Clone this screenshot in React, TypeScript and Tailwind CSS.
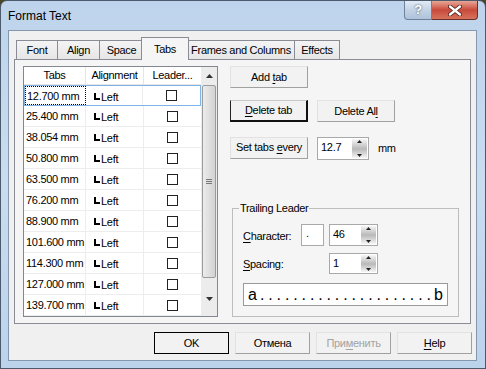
import React from "react";

const rows = [
  "12.700 mm",
  "25.400 mm",
  "38.054 mm",
  "50.800 mm",
  "63.500 mm",
  "76.200 mm",
  "88.900 mm",
  "101.600 mm",
  "114.300 mm",
  "127.000 mm",
  "139.700 mm",
];

const tabs = [
  { label: "Font", w: "w-[41px]" },
  { label: "Align", w: "w-[42px]" },
  { label: "Space", w: "w-[44px]" },
  { label: "Tabs", w: "w-[44px]", active: true },
  { label: "Frames and Columns", w: "w-[107px]" },
  { label: "Effects", w: "w-[46px]", last: true },
];

function U({ children }: { children: React.ReactNode }) {
  return <span className="underline underline-offset-[2px] decoration-1">{children}</span>;
}

function Btn({
  w,
  h = "h-[22px]",
  variant = "normal",
  children,
}: {
  w: string;
  h?: string;
  variant?: "normal" | "default" | "focus" | "disabled";
  children: React.ReactNode;
}) {
  const border =
    variant === "default"
      ? "border border-black"
      : variant === "focus"
        ? "border-t border-l border-r-2 border-b-2 border-t-[#c8c8c8] border-l-[#222] border-r-[#111] border-b-[#111]"
        : "border border-t-[#e2e2e2] border-l-[#e2e2e2] border-r-[#a0a0a0] border-b-[#a0a0a0]";
  return (
    <div
      className={`${w} ${h} ${border} flex shrink-0 items-center justify-center whitespace-nowrap bg-[#f2f2f2] ${
        variant === "disabled" ? "text-[#a3a3a3]" : "text-black"
      }`}
    >
      {children}
    </div>
  );
}

function Arrow({ up }: { up?: boolean }) {
  return (
    <svg width="5" height="3" viewBox="0 0 5 3">
      <path d={up ? "M0 3 L2.5 0 L5 3 Z" : "M0 0 L2.5 3 L5 0 Z"} fill="#222" />
    </svg>
  );
}

function Spin({ value, w, h = "h-[22px]" }: { value: string; w: string; h?: string }) {
  return (
    <div className={`${w} ${h} flex shrink-0 border border-[#a9a9a9] bg-white`}>
      <div className="flex-1 pl-[3px] pt-[2px] leading-[14px]">{value}</div>
      <div className="my-[1px] mr-[1px] flex w-[15px] flex-col">
        <div className="flex flex-1 items-start justify-center bg-gradient-to-b from-[#f6f6f6] to-[#b9b9b9] pt-[1px]">
          <Arrow up />
        </div>
        <div className="flex flex-1 items-end justify-center bg-gradient-to-b from-[#b9b9b9] to-[#f6f6f6] pb-[1px]">
          <Arrow />
        </div>
      </div>
    </div>
  );
}

function TabIcon() {
  return (
    <svg width="6" height="7" viewBox="0 0 6 7" className="mr-[1px] mt-[1px]">
      <rect x="0" y="0" width="2" height="7" fill="#000" />
      <rect x="0" y="5" width="6" height="2" fill="#000" />
    </svg>
  );
}

function TabList() {
  return (
    <div className="flex h-[251px] w-[195px] shrink-0 border border-[#828790] bg-white">
      <div className="flex w-[177px] flex-col">
        <div className="flex h-[18px] border-b border-[#e5e5e5] leading-[17px]">
          <div className="w-[62px] border-r border-[#e5e5e5] text-center">Tabs</div>
          <div className="w-[58px] border-r border-[#e5e5e5] text-center">Alignment</div>
          <div className="w-[57px] text-center">Leader...</div>
        </div>
        {rows.map((r, i) => (
          <div
            key={r}
            className={`flex h-[21px] ${
              i === 0 ? "border border-[#7db4e8]" : "border-b border-[#ededed]"
            }`}
          >
            <div
              className={`flex items-center whitespace-nowrap pt-[1px] ${
                i === 0
                  ? "w-[61px] border border-dotted border-black pl-[1px]"
                  : "w-[62px] border-r border-[#ededed] pl-[2px]"
              }`}
            >
              {r}
            </div>
            <div
              className={`flex items-center border-r border-[#ededed] ${
                i === 0 ? "w-[57px] pl-[8px]" : "w-[58px] pl-[8px]"
              }`}
            >
              <TabIcon />
              <span className="pt-[3px]">Left</span>
            </div>
            <div className="flex flex-1 items-center justify-center">
              <div className="h-[11px] w-[11px] border border-[#222] bg-white" />
            </div>
          </div>
        ))}
      </div>
      <div className="flex w-[16px] flex-col bg-[#ececec]">
        <div className="flex h-[18px] items-center justify-center">
          <svg width="7" height="4" viewBox="0 0 7 4">
            <path d="M0 4 L3.5 0 L7 4 Z" fill="#333" />
          </svg>
        </div>
        <div className="mx-[1px] flex h-[193px] items-center justify-center rounded-[2px] border border-[#9b9b9b] bg-gradient-to-r from-[#ececec] to-[#d2d2d2]">
          <div className="flex flex-col gap-[1px]">
            <div className="h-px w-[6px] bg-[#777]" />
            <div className="h-px w-[6px] bg-[#777]" />
            <div className="h-px w-[6px] bg-[#777]" />
          </div>
        </div>
        <div className="flex flex-1 items-center justify-center pt-[4px]">
          <svg width="7" height="4" viewBox="0 0 7 4">
            <path d="M0 0 L3.5 4 L7 0 Z" fill="#333" />
          </svg>
        </div>
      </div>
    </div>
  );
}

export default function App() {
  const dots = Array.from({ length: 21 });
  return (
    <div className="h-[369px] w-[486px] bg-[#4b4527] font-['Liberation_Sans',sans-serif] text-[11px] tracking-[-0.3px] text-black">
      <div className="flex h-full w-full flex-col rounded-t-[7px] border border-[#4c5b6c] bg-gradient-to-b from-[#bed4ec] via-[#c9dcf0] to-[#bcd3ec]">
        {/* title bar */}
        <div className="flex h-[29px] shrink-0">
          <div className="self-center pl-[7px] pt-[1px] text-[12px] tracking-normal">Format Text</div>
          <div className="ml-auto mr-[7px] flex h-[19px]">
            <div className="flex w-[28px] items-center justify-center rounded-bl-[4px] border border-t-0 border-[#6f8199] bg-gradient-to-b from-[#e3ebf5] via-[#c3d3e6] to-[#aec2da] text-[13px] font-bold text-white [text-shadow:0_0_2px_#2c3c55]">
              ?
            </div>
            <div className="flex w-[46px] items-center justify-center rounded-br-[4px] border border-l-0 border-t-0 border-[#6b2f2a] bg-gradient-to-b from-[#e7a597] via-[#c8493b] to-[#d7735d]">
              <svg width="14" height="11" viewBox="0 0 14 11">
                <path d="M2 1.5 L12 9.5 M12 1.5 L2 9.5" stroke="#4a1d18" strokeWidth="4" strokeLinecap="round" />
                <path d="M2 1.5 L12 9.5 M12 1.5 L2 9.5" stroke="#ffffff" strokeWidth="2.4" strokeLinecap="round" />
              </svg>
            </div>
          </div>
        </div>

        {/* client area */}
        <div className="ml-[7px] mr-[8px] mb-[7px] flex h-[331px] flex-col border border-[#8397ad] bg-[#f0f0f0]">
          {/* tab strip */}
          <div className="ml-[7px] mt-[6px] flex h-[22px] items-end">
            {tabs.map((t) =>
              t.active ? (
                <div
                  key={t.label}
                  className="relative z-10 -mx-[2px] mb-[-1px] flex h-[23px] w-[48px] items-start justify-center border border-b-0 border-[#898c95] bg-[#f5f5f5] pt-[3px]"
                >
                  {t.label}
                </div>
              ) : (
                <div
                  key={t.label}
                  className={`${t.w} flex h-[19px] items-center justify-center whitespace-nowrap border-l border-t border-[#898c95] bg-gradient-to-b from-[#f4f4f4] to-[#e6e6e6] ${
                    t.last ? "border-r" : ""
                  }`}
                >
                  {t.label}
                </div>
              ),
            )}
          </div>

          {/* tab page */}
          <div className="ml-[5px] flex h-[265px] w-[457px] border border-[#898c95] bg-[#f5f5f5]">
            <div className="ml-[8px] mt-[6px]">
              <TabList />
            </div>

            <div className="ml-[12px] mt-[6px] flex flex-col">
              <Btn w="w-[78px]">
                Add&nbsp;<U>t</U>ab
              </Btn>
              <div className="mt-[12px] flex gap-[9px]">
                <Btn w="w-[78px]" variant="focus">
                  <U>D</U>elete tab
                </Btn>
                <Btn w="w-[78px]">
                  Delete Al<U>l</U>
                </Btn>
              </div>
              <div className="mt-[13px] flex items-center">
                <Btn w="w-[78px]">
                  Set tabs&nbsp;<U>e</U>very
                </Btn>
                <div className="ml-[9px] mt-[2px]">
                  <Spin value="12.7" w="w-[52px]" h="h-[23px]" />
                </div>
                <div className="ml-[9px] mt-[2px]">mm</div>
              </div>

              <div className="relative ml-[2px] mt-[48px] flex h-[109px] w-[227px] flex-col border border-[#bdbdbd] pl-[10px]">
                <div className="absolute -top-[7px] left-[6px] bg-[#f5f5f5] px-[1px] leading-[13px]">
                  Trailing Leader
                </div>
                <div className="mt-[15px] flex items-center">
                  <div className="w-[58px] pt-[2px]">
                    <U>C</U>haracter:
                  </div>
                  <div className="h-[22px] w-[23px] border border-[#a9a9a9] bg-white pl-[4px] leading-[16px]">.</div>
                  <div className="ml-[5px]">
                    <Spin value="46" w="w-[49px]" />
                  </div>
                </div>
                <div className="mt-[7px] flex items-center">
                  <div className="w-[86px] pt-[2px]">
                    <U>S</U>pacing:
                  </div>
                  <Spin value="1" w="w-[49px]" h="h-[21px]" />
                </div>
                <div className="mt-[9px] flex h-[23px] w-[205px] items-center border border-[#9a9a9a] bg-white px-[4px] text-[16px] leading-none tracking-normal">
                  <span>a</span>
                  <div className="flex flex-1 justify-between px-[3px]">
                    {dots.map((_, i) => (
                      <span key={i}>.</span>
                    ))}
                  </div>
                  <span>b</span>
                </div>
              </div>
            </div>
          </div>

          {/* bottom buttons */}
          <div className="mt-[8px] flex justify-end gap-[6px] pr-[4px]">
            <Btn w="w-[75px]" variant="default">
              OK
            </Btn>
            <Btn w="w-[75px]">Отмена</Btn>
            <Btn w="w-[75px]" variant="disabled">
              При<U>м</U>енить
            </Btn>
            <Btn w="w-[75px]">
              <U>H</U>elp
            </Btn>
          </div>
        </div>
      </div>
    </div>
  );
}
